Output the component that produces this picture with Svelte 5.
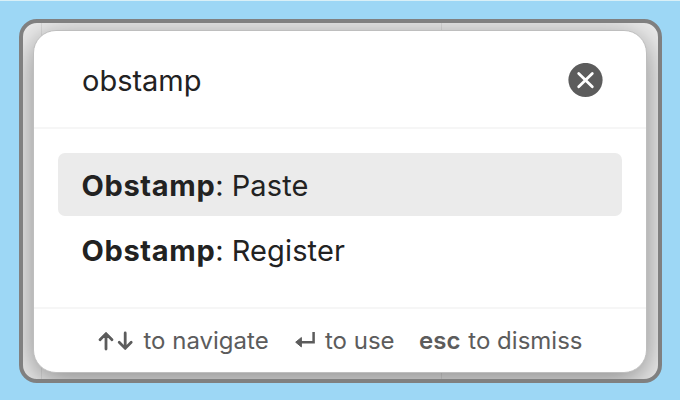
<script>
  const query = 'obstamp';
  const commands = [
    { plugin: 'Obstamp', action: 'Paste' },
    { plugin: 'Obstamp', action: 'Register' }
  ];
  let selected = $state(0);
</script>

<main>
  <div class="window">
    <section class="prompt">
      <header>
        <span class="query">{query}</span>
        <svg class="clear" width="35" height="35" viewBox="0 0 35 35" aria-label="Clear">
          <circle cx="17.5" cy="17" r="17.1" fill="#5c5c5c" />
          <path d="M10.7 10.5 24.3 23.7M24.3 10.5 10.7 23.7" stroke="#fff" stroke-width="2.8" stroke-linecap="round" />
        </svg>
      </header>
      <div class="results">
        {#each commands as command, i}
          <div class="item" class:selected={i === selected}>
            <b>{command.plugin}</b><span class="colon">:</span><span class="action">{command.action}</span>
          </div>
        {/each}
      </div>
      <footer>
        <div class="hint nav">
          <svg width="36" height="20" viewBox="0 0 36 20" fill="none" stroke="#5c5c5c" stroke-width="2.8" stroke-linecap="round" stroke-linejoin="round">
            <path d="M8 18V3M2 8.8 8 2.6 14 8.8M27.2 2v15M21.2 11.2l6 6.2 6-6.2" />
          </svg>
          <span>to navigate</span>
        </div>
        <div class="hint use">
          <svg width="21" height="20" viewBox="0 0 21 20" fill="none">
            <path d="M18.6 1v10.2H5" stroke="#5c5c5c" stroke-width="2.5" />
            <path d="M6.4 6.5.7 11.2l5.7 4.7z" fill="#5c5c5c" stroke="#5c5c5c" stroke-linejoin="round" />
          </svg>
          <span>to use</span>
        </div>
        <div class="hint dismiss"><b>esc</b><span>to dismiss</span></div>
      </footer>
    </section>
  </div>
</main>

<style>
  main {
    box-sizing: border-box;
    width: 680px;
    height: 400px;
    padding: 18px 18px 17px 19px;
    border-top: 1px solid #d9f0f7;
    background: #9dd7f5;
    font-family: Inter, "Liberation Sans", sans-serif;
    color: #222;
    overflow: hidden;
  }
  .window {
    box-sizing: border-box;
    width: 643px;
    height: 364px;
    padding: 7px 11px 6px 10px;
    border: 4px solid #808080;
    border-radius: 18px;
    overflow: hidden;
    background:
      linear-gradient(#00000012, #00000012) 18px 0 / 1px 100% no-repeat,
      linear-gradient(#00000012, #00000012) 418px 0 / 1px 100% no-repeat,
      #ededed;
  }
  .prompt {
    box-sizing: border-box;
    display: flex;
    flex-direction: column;
    width: 614px;
    height: 343px;
    border: 1px solid #bebebe;
    border-radius: 23px;
    background: #fff;
    overflow: hidden;
    box-shadow: 0 7px 32px #00000070;
  }
  header {
    display: flex;
    align-items: center;
    justify-content: space-between;
    height: 96px;
    padding: 0 43px 0 48px;
    border-bottom: 2px solid #f6f6f6;
  }
  .query {
    margin-top: 2px;
    font-size: 29px;
  }
  .clear { margin-top: 2px; }
  .results {
    flex: 1;
    padding: 24px 24px 0 23.5px;
  }
  .item {
    box-sizing: border-box;
    display: flex;
    align-items: center;
    height: 63px;
    margin-bottom: 2px;
    padding: 2px 25px 0 24px;
    border-radius: 7px;
    font-size: 29px;
    white-space: nowrap;
  }
  .item.selected { background: #ebebeb; }
  .item b {
    font-weight: 700;
    letter-spacing: 0.66px;
  }
  .action {
    margin-left: 8px;
    letter-spacing: 0.12px;
  }
  footer {
    display: flex;
    align-items: center;
    height: 63px;
    padding-left: 64px;
    border-top: 2px solid #f6f6f6;
    font-size: 24px;
    color: #5c5c5c;
    white-space: nowrap;
  }
  .hint {
    display: flex;
    align-items: center;
  }
  .nav { width: 197px; }
  .use { width: 124px; }
  .nav span { margin-left: 9.5px; }
  .use span { margin-left: 9px; }
  .dismiss b { font-weight: 600; }
  .dismiss span { margin-left: 8px; }
</style>
